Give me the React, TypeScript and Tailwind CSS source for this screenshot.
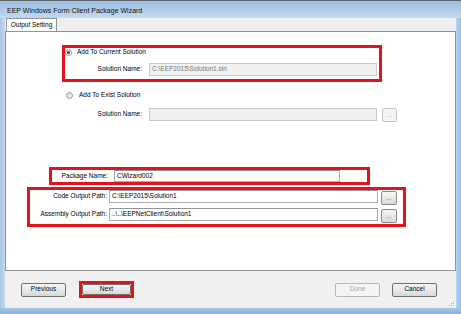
import React from 'react';

const font = "font-['Liberation_Sans',Arial,sans-serif]";

function TextBox({ value, w, h = 13, disabled }: { value?: string; w: number; h?: number; disabled?: boolean }) {
  return (
    <div
      className={`flex shrink-0 items-center border px-[2px] text-[6.5px] leading-none ${
        disabled
          ? 'border-[#c9c9c9] bg-[#f0f0f0] text-[#7a7a7a]'
          : 'border-[#abadb3] border-t-[#8f939a] bg-white text-black'
      }`}
      style={{ width: w, height: h }}
    >
      {value}
    </div>
  );
}

function DotsButton({ w = 16, disabled }: { w?: number; disabled?: boolean }) {
  return (
    <div
      className={`flex h-[14px] shrink-0 items-center justify-center rounded-[2px] border text-[6px] leading-none ${
        disabled
          ? 'border-[#c4c4c4] bg-[#f4f4f4] text-[#a0a0a0]'
          : 'border-[#8a8a8a] bg-linear-to-b from-[#f7f7f7] to-[#d9d9d9] text-[#333]'
      }`}
      style={{ width: w }}
    >
      ...
    </div>
  );
}

function Radio({ checked }: { checked?: boolean }) {
  return (
    <div className="flex h-[7px] w-[7px] shrink-0 items-center justify-center rounded-full border border-[#9a9a9a] bg-linear-to-br from-[#d8d8d8] to-[#f6f6f6]">
      {checked && <div className="h-[3px] w-[3px] rounded-full bg-[#1f4f8f]" />}
    </div>
  );
}

function WinButton({ label, disabled, className = '' }: { label: string; disabled?: boolean; className?: string }) {
  return (
    <div
      className={`flex h-[14px] shrink-0 items-center justify-center rounded-[2px] border text-[6.5px] leading-none ${
        disabled
          ? 'border-[#b5b8ba] bg-[#f4f4f4] text-[#a3a3a3]'
          : 'border-[#707070] bg-linear-to-b from-[#f4f4f4] via-[#e9e9e9] to-[#d6d6d6] text-black'
      } ${className}`}
    >
      {label}
    </div>
  );
}

export default function App() {
  return (
    <div className={`flex h-[314px] w-[461px] flex-col overflow-hidden bg-[#b9d1ea] ${font}`}>
      <div className="h-px bg-[#5e6670]" />
      <div className="flex h-[17px] items-center bg-linear-to-b from-[#9dbde0] to-[#c3d8ee] pl-[7px] pt-[3px] text-[7px] text-[#111]">
        EEP Windows Form Client Package Wizard
      </div>

      <div className="flex h-[290px]">
        <div className="w-[5px] bg-linear-to-r from-[#a9c5e4] to-[#c4d8ee]" />
        <div className="flex w-[451px] flex-col bg-[#f0f0f0]">
          {/* tab strip */}
          <div className="flex h-[13px] items-end bg-[#eeeeee]">
            <div className="ml-px flex h-[13px] w-[51px] items-center justify-center border border-b-0 border-[#8e9399] bg-white pt-px text-[6.5px] leading-none text-black">
              Output Setting
            </div>
          </div>

          {/* panel */}
          <div className="flex h-[240px] flex-col items-start border border-[#8e9399] bg-white">
            <div className="ml-[56px] mt-[13px] flex h-[37px] w-[320px] flex-col border-[3px] border-[#e3121b]">
              <div className="flex h-[8px] items-center">
                <Radio checked />
                <span className="ml-[5px] text-[6.5px] leading-none text-black">Add To Current Solution</span>
              </div>
              <div className="mt-[7px] flex items-center">
                <span className="w-[77px] text-right text-[6.5px] leading-none text-black">Solution Name:</span>
                <div className="ml-[7px]">
                  <TextBox value="C:\EEP2015\Solution1.sln" w={228} disabled />
                </div>
              </div>
            </div>

            <div className="ml-[60px] mt-[9px] flex h-[8px] items-center">
              <Radio />
              <span className="ml-[6px] text-[6.5px] leading-none text-black">Add To Exist Solution</span>
            </div>

            <div className="ml-[60px] mt-[9px] flex items-start">
              <span className="flex h-[13px] w-[76px] items-center justify-end text-[6.5px] leading-none text-black">
                Solution Name:
              </span>
              <div className="ml-[7px]">
                <TextBox w={228} disabled />
              </div>
              <div className="ml-[5px]">
                <DotsButton w={15} disabled />
              </div>
            </div>

            <div className="ml-[43px] mt-[45px] flex h-[18px] w-[321px] items-center border-[3px] border-[#e3121b]">
              <span className="w-[56px] text-right text-[6.5px] leading-none text-black">Package Name:</span>
              <div className="ml-[6px]">
                <TextBox value="CWizard002" w={226} h={12} />
              </div>
            </div>

            <div className="ml-[21px] mt-[2px] flex h-[40px] w-[379px] flex-col border-[3px] border-[#e3121b]">
              <div className="flex items-start">
                <span className="flex h-[13px] w-[77px] items-center justify-end text-[6.5px] leading-none text-black">
                  Code Output Path:
                </span>
                <div className="ml-[2px]">
                  <TextBox value="C:\EEP2015\Solution1" w={269} />
                </div>
                <div className="ml-[3px] mt-px">
                  <DotsButton />
                </div>
              </div>
              <div className="mt-[3px] flex items-start">
                <span className="flex h-[13px] w-[77px] items-center justify-end text-[6.5px] leading-none text-black">
                  Assembly Output Path:
                </span>
                <div className="ml-[2px]">
                  <TextBox value="..\..\EEPNetClient\Solution1" w={269} />
                </div>
                <div className="ml-[3px] mt-px">
                  <DotsButton />
                </div>
              </div>
            </div>
          </div>

          {/* bottom buttons */}
          <div className="relative flex h-[37px] items-center pl-[16px] pr-[19px]">
            <WinButton label="Previous" className="w-[45px]" />
            <div className="ml-[13px] flex h-[17px] w-[55px] border-[3px] border-[#e3121b]">
              <WinButton label="Next" className="h-full w-full" />
            </div>
            <div className="flex-1" />
            <WinButton label="Done" disabled className="w-[45px]" />
            <WinButton label="Cancel" className="ml-[12px] w-[45px]" />
            <div className="absolute bottom-[2px] right-[2px] grid grid-cols-3 gap-px">
              <span />
              <span />
              <span className="h-px w-px bg-[#b0b0b0]" />
              <span />
              <span className="h-px w-px bg-[#b0b0b0]" />
              <span className="h-px w-px bg-[#b0b0b0]" />
              <span className="h-px w-px bg-[#b0b0b0]" />
              <span className="h-px w-px bg-[#b0b0b0]" />
              <span className="h-px w-px bg-[#b0b0b0]" />
            </div>
          </div>
        </div>
        <div className="w-[5px] bg-linear-to-r from-[#b8d3ee] to-[#86c3f2]" />
      </div>
      <div className="h-[6px] bg-linear-to-b from-[#a7c6e6] to-[#86b4df]" />
    </div>
  );
}
